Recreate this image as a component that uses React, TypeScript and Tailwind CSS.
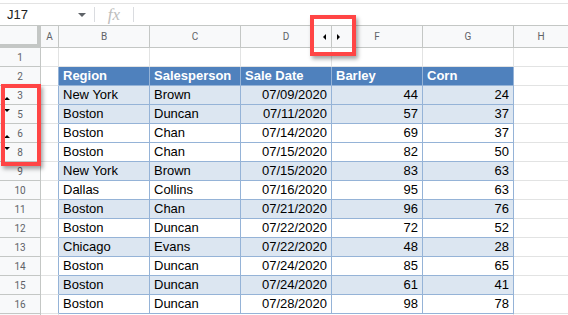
import React from "react";

type Row = {
    num: number;
    region: string;
    person: string;
    date: string;
    barley: number;
    corn: number;
    band: boolean;
    mark?: "up" | "down";
};

const rows: Row[] = [
    { num: 3, region: "New York", person: "Brown", date: "07/09/2020", barley: 44, corn: 24, band: true, mark: "up" },
    { num: 5, region: "Boston", person: "Duncan", date: "07/11/2020", barley: 57, corn: 37, band: true, mark: "down" },
    { num: 6, region: "Boston", person: "Chan", date: "07/14/2020", barley: 69, corn: 37, band: false, mark: "up" },
    { num: 8, region: "Boston", person: "Chan", date: "07/15/2020", barley: 82, corn: 50, band: false, mark: "down" },
    { num: 9, region: "New York", person: "Brown", date: "07/15/2020", barley: 83, corn: 63, band: true },
    { num: 10, region: "Dallas", person: "Collins", date: "07/16/2020", barley: 95, corn: 63, band: false },
    { num: 11, region: "Boston", person: "Chan", date: "07/21/2020", barley: 96, corn: 76, band: true },
    { num: 12, region: "Boston", person: "Duncan", date: "07/22/2020", barley: 72, corn: 52, band: false },
    { num: 13, region: "Chicago", person: "Evans", date: "07/22/2020", barley: 48, corn: 28, band: true },
    { num: 14, region: "Boston", person: "Duncan", date: "07/24/2020", barley: 85, corn: 65, band: false },
    { num: 15, region: "Boston", person: "Duncan", date: "07/24/2020", barley: 61, corn: 41, band: true },
    { num: 16, region: "Boston", person: "Duncan", date: "07/28/2020", barley: 98, corn: 78, band: false },
];

const RowHead = ({ num, mark }: { num?: number; mark?: "up" | "down" }) => (
    <div className="relative w-[41px] shrink-0 h-full flex items-center justify-center bg-[#f8f9fa] border-r border-b border-[#c4c7c5] text-[10px] text-[#5f6368] font-['Roboto',sans-serif]">
        {num}
        {mark === "up" && (
            <span className="absolute left-[4px] bottom-[4px] w-0 h-0 border-l-[3px] border-r-[3px] border-b-[3px] border-l-transparent border-r-transparent border-b-black"></span>
        )}
        {mark === "down" && (
            <span className="absolute left-[4px] top-[4px] w-0 h-0 border-l-[3px] border-r-[3px] border-t-[3px] border-l-transparent border-r-transparent border-t-black"></span>
        )}
    </div>
);

const App = () => {
    return (
        <div className="relative w-[568px] h-[315px] overflow-hidden bg-white font-['Liberation_Sans',Arial,sans-serif]">
            {/* formula bar */}
            <div className="mt-[3px] h-[22px] border-t border-[#e3e3e3] flex items-center text-[13px] text-[#202124]">
                <div className="w-[94px] flex items-center pl-[7px] pr-[8px] justify-between">
                    <span>J17</span>
                    <span className="w-0 h-0 border-l-[4px] border-r-[4px] border-t-[4px] border-l-transparent border-r-transparent border-t-[#5f6368]"></span>
                </div>
                <div className="w-px h-[15px] bg-[#dadce0]"></div>
                <div className="w-[38px] text-center font-['Liberation_Serif',serif] italic text-[17px] text-[#bdbdbd]">fx</div>
                <div className="w-px h-[15px] bg-[#dadce0]"></div>
            </div>

            {/* column headers */}
            <div className="flex h-[23px] border-t border-[#c4c7c5] bg-[#f8f9fa] text-[10px] text-[#5f6368] font-['Roboto',sans-serif]">
                <div className="w-[41px] shrink-0 h-full border-r-[4px] border-b-[4px] border-[#c4c7c5] bg-[#f8f9fa]"></div>
                <div className="w-[18px] shrink-0 flex items-center justify-center border-r border-b border-[#c4c7c5]">A</div>
                <div className="w-[91px] shrink-0 flex items-center justify-center border-r border-b border-[#c4c7c5]">B</div>
                <div className="w-[91px] shrink-0 flex items-center justify-center border-r border-b border-[#c4c7c5]">C</div>
                <div className="relative w-[91px] shrink-0 flex items-center justify-center border-r border-b border-[#c4c7c5]">
                    D
                    <span className="absolute right-[5px] top-[8px] w-0 h-0 border-t-[3px] border-b-[3px] border-r-[3px] border-t-transparent border-b-transparent border-r-black"></span>
                </div>
                <div className="relative w-[91px] shrink-0 flex items-center justify-center border-r border-b border-[#c4c7c5]">
                    F
                    <span className="absolute left-[5px] top-[8px] w-0 h-0 border-t-[3px] border-b-[3px] border-l-[3px] border-t-transparent border-b-transparent border-l-black"></span>
                </div>
                <div className="w-[91px] shrink-0 flex items-center justify-center border-r border-b border-[#c4c7c5]">G</div>
                <div className="flex-1 flex items-center justify-center border-b border-[#c4c7c5]">H</div>
            </div>

            {/* row 1 */}
            <div className="flex h-[19px]">
                <RowHead num={1} />
                <div className="w-[18px] shrink-0 border-r border-b border-[#e2e3e3]"></div>
                <div className="w-[91px] shrink-0 border-r border-b border-[#e2e3e3]"></div>
                <div className="w-[91px] shrink-0 border-r border-b border-[#e2e3e3]"></div>
                <div className="w-[91px] shrink-0 border-r border-b border-[#e2e3e3]"></div>
                <div className="w-[91px] shrink-0 border-r border-b border-[#e2e3e3]"></div>
                <div className="w-[91px] shrink-0 border-r border-b border-[#e2e3e3]"></div>
                <div className="flex-1 border-b border-[#e2e3e3]"></div>
            </div>

            {/* row 2: table header */}
            <div className="flex h-[19px] text-[13px]">
                <RowHead num={2} />
                <div className="w-[18px] shrink-0 border-r border-b border-r-[#95b3d7] border-b-[#e2e3e3]"></div>
                {["Region", "Salesperson", "Sale Date", "Barley", "Corn"].map((h) => (
                    <div key={h} className="w-[91px] shrink-0 flex items-center px-[4px] bg-[#4f81bd] text-white font-bold border-r border-b border-[#95b3d7]">
                        {h}
                    </div>
                ))}
                <div className="flex-1 border-b border-[#e2e3e3]"></div>
            </div>

            {rows.map((r) => {
                const bg = r.band ? "bg-[#dce6f1]" : "bg-white";
                return (
                    <div key={r.num} className="flex h-[19px] text-[13px] text-black">
                        <RowHead num={r.num} mark={r.mark} />
                        <div className="w-[18px] shrink-0 border-r border-b border-r-[#95b3d7] border-b-[#e2e3e3]"></div>
                        <div className={`w-[91px] shrink-0 flex items-center px-[4px] border-r border-b border-[#95b3d7] ${bg}`}>{r.region}</div>
                        <div className={`w-[91px] shrink-0 flex items-center px-[4px] border-r border-b border-[#95b3d7] ${bg}`}>{r.person}</div>
                        <div className={`w-[91px] shrink-0 flex items-center justify-end px-[4px] border-r border-b border-[#95b3d7] ${bg}`}>{r.date}</div>
                        <div className={`w-[91px] shrink-0 flex items-center justify-end px-[4px] border-r border-b border-[#95b3d7] ${bg}`}>{r.barley}</div>
                        <div className={`w-[91px] shrink-0 flex items-center justify-end px-[4px] border-r border-b border-[#95b3d7] ${bg}`}>{r.corn}</div>
                        <div className="flex-1 border-b border-[#e2e3e3]"></div>
                    </div>
                );
            })}

            {/* row 17, cut off by the window edge */}
            <div className="flex h-[19px]">
                <RowHead />
                <div className="w-[18px] shrink-0 border-r border-[#e2e3e3]"></div>
                <div className="w-[455px] shrink-0 border-r border-[#e2e3e3]"></div>
            </div>

            {/* highlight boxes */}
            <div className="absolute left-[1px] top-[84px] w-[40px] h-[82px] border-[4px] border-[#ff4545] shadow-[2px_3px_4px_rgba(0,0,0,0.35)]"></div>
            <div className="absolute left-[310px] top-[15px] w-[46px] h-[41px] border-[4px] border-[#ff4545] shadow-[2px_3px_4px_rgba(0,0,0,0.35)]"></div>
        </div>
    );
};

export default App;
